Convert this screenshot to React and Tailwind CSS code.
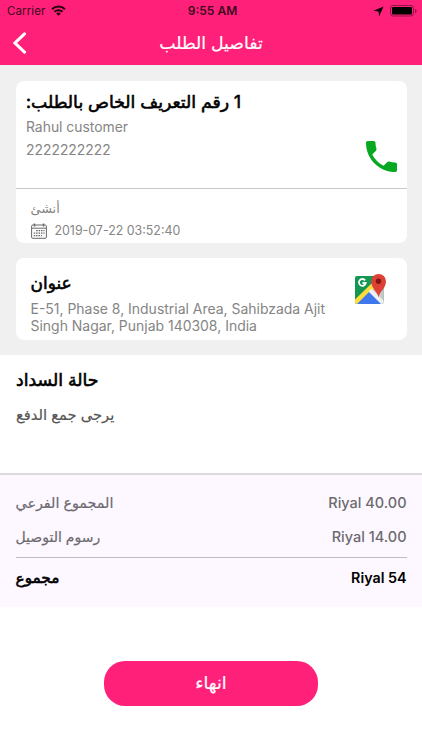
import React from "react";

const latin = "font-['Inter',sans-serif]";
const arabic = "font-['Inter','DejaVu_Sans',sans-serif]";
const heavy = "font-normal [-webkit-text-stroke:0.6px_currentColor]";
const medium = "font-normal [-webkit-text-stroke:0.2px_currentColor]";

function StatusBar() {
  return (
    <div className="grid h-[22px] grid-cols-3 items-center pl-[7px] pr-[5px] text-[11.5px] text-[#3d0a1e]">
      <div className="flex items-center gap-[6px] pt-px">
        <span className="tracking-[0.1px]">Carrier</span>
        <svg className="-mt-[2px]" width="15" height="11" viewBox="0 0 15 11" fill="none" stroke="#26000f" strokeWidth="2">
          <path d="M1 4.2a9.3 9.3 0 0 1 13 0" />
          <path d="M3.4 6.8a5.9 5.9 0 0 1 8.2 0" />
          <path d="M7.5 10.8 5.2 8.5a3.3 3.3 0 0 1 4.6 0Z" fill="#26000f" stroke="none" />
        </svg>
      </div>
      <span className="pl-px text-center text-[12px] font-semibold leading-[20px]">9:55 AM</span>
      <div className="flex items-center justify-end gap-[6px]">
        <svg width="11" height="11" viewBox="0 0 11 11" fill="#12000a">
          <path d="M10.6.4 6.1 10.4 5.5 5.5.4 4.8Z" />
        </svg>
        <svg width="27" height="12" viewBox="0 0 27 12">
          <rect x=".5" y=".5" width="23" height="10.5" rx="2.5" fill="none" stroke="#8d1747" />
          <rect x="2" y="2" width="20" height="7.5" rx="1" fill="#000" />
          <path d="M25 4v4c1-.3 1.5-1 1.5-2S26 4.300 25 4Z" fill="#8d1747" />
        </svg>
      </div>
    </div>
  );
}

function PhoneIcon() {
  return (
    <svg width="31" height="31" viewBox="3 3 18 18" fill="#08a822">
      <path d="M6.620 10.790c1.440 2.830 3.760 5.140 6.590 6.590l2.200-2.200c.27-.27.67-.36 1.020-.24 1.120.37 2.330.57 3.570.57.55 0 1 .45 1 1V20c0 .55-.45 1-1 1C10.610 21 3 13.390 3 4c0-.55.45-1 1-1h3.500c.55 0 1 .45 1 1 0 1.250.2 2.450.57 3.570.11.350.03.740-.25 1.020l-2.200 2.200Z" />
    </svg>
  );
}

function CalendarIcon() {
  return (
    <svg width="16" height="16" viewBox="0 0 16 16" fill="none" stroke="#666">
      <rect x=".6" y="2" width="14.800" height="13.300" rx="1.200" />
      <path d="M.6 5.200h14.800" />
      <path d="M3.500.4v3M12.500.4v3" strokeWidth="1.400" />
      <path d="M5.200 7.700h8.300M2.700 10.200h10.800M2.700 12.700h8.300" strokeWidth="1.300" strokeDasharray="1.500 .9" />
    </svg>
  );
}

function MapsIcon() {
  return (
    <svg width="32" height="32" viewBox="0 0 32 32">
      <defs>
        <clipPath id="tile">
          <rect x="0" y="3" width="28.500" height="28" rx="2" />
        </clipPath>
      </defs>
      <g clipPath="url(#tile)">
        <path d="M0 3h29v28H0Z" fill="#169653" />
        <path d="M29 10v21L15 17.500 20 10Z" fill="#c9c9c9" />
        <path d="M-1 27.500 16.500 10.500l3.500 4L1 33H-1Z" fill="#ffdc3a" />
        <path d="M2 31 14.500 18.500 27 31Z" fill="#3f78ec" />
        <path d="m13.500 18.500 2.800-2.800L30 29v4h-2Z" fill="#eef0f2" />
      </g>
      <path d="M23.500 24.500c-.7-5.500-7.300-9-7.300-16.200a7.400 7.400 0 0 1 14.800 0c0 7.200-6.800 10.700-7.500 16.200Z" fill="#df4035" />
      <circle cx="23.500" cy="8.200" r="2.700" fill="#7c1714" />
      <path d="M10.100 7.400A3.400 3.400 0 1 0 10.700 10H7.500" fill="none" stroke="#fff" strokeWidth="1.800" />
    </svg>
  );
}

export default function App() {
  return (
    <div className={`flex h-[750px] w-[422px] flex-col overflow-hidden bg-white ${latin}`}>
      <header className="h-[65px] bg-[#ff2079]">
        <StatusBar />
        <div className="grid h-[43px] grid-cols-[40px_1fr_40px] items-center">
          <svg className="-mt-[2px] ml-[13px]" width="14" height="22" viewBox="0 0 14 22" fill="none" stroke="#fff" strokeWidth="3" strokeLinecap="round">
            <path d="M11.500 1.800 2 11l9.500 9.200" />
          </svg>
          <h1 dir="rtl" className={`pb-[2px] text-center text-[17.300px] text-white ${medium} ${arabic}`}>تفاصيل الطلب</h1>
        </div>
      </header>

      <main className="flex flex-col">
        <div className="flex h-[290px] flex-col gap-[15px] bg-[#f0f0f0] px-[15.500px] pt-4">
          <section className="h-[162px] rounded-[8px] bg-white">
            <div className="flex h-[108px] justify-between border-b border-[#c8c8c8] pl-[10.500px] pr-[10px]">
              <div className="pt-[8px] text-[13.900px] leading-[23px] text-[#858585]">
                <h2 dir="rtl" className={`h-[27px] w-fit whitespace-nowrap text-[17.300px] leading-[25px] text-black ${heavy} ${arabic}`}>1 رقم التعريف الخاص بالطلب:</h2>
                <p>Rahul customer</p>
                <p>2222222222</p>
              </div>
              <div className="pt-[60px]"><PhoneIcon /></div>
            </div>
            <div className="pl-[15px] pt-[9px] text-[#858585]">
              <p dir="rtl" className={`h-[22px] w-fit text-[12.800px] leading-[22px] ${arabic}`}>أنشئ</p>
              <div className="flex h-[22px] items-center gap-2 text-[12.400px]">
                <CalendarIcon />
                <span>2019-07-22 03:52:40</span>
              </div>
            </div>
          </section>

          <section className="flex h-[82px] justify-between rounded-[8px] bg-white pl-[15px] pr-[20px]">
            <div className="pt-[13px] text-[13.960px] leading-[17px] text-[#858585]">
              <h2 dir="rtl" className={`h-[29px] w-fit text-[17px] leading-[24px] text-black ${heavy} ${arabic}`}>عنوان</h2>
              <p className="whitespace-nowrap">E-51, Phase 8, Industrial Area, Sahibzada Ajit<br />Singh Nagar, Punjab 140308, India</p>
            </div>
            <div className="pt-[15px]"><MapsIcon /></div>
          </section>
        </div>

        <section className="h-[120px] border-b-2 border-[#dcdadd] px-4 pt-[12px]">
          <h2 dir="rtl" className={`w-fit text-[17.300px] leading-[26px] text-black ${heavy} ${arabic}`}>حالة السداد</h2>
          <p dir="rtl" className={`mt-[10px] w-fit text-[14.700px] leading-[24px] text-[#555] ${medium} ${arabic}`}>يرجى جمع الدفع</p>
        </section>

        <section className={`h-[132px] bg-[#fdf8ff] px-[15.500px] pt-[11px] text-[14.500px] font-medium text-[#6d6a6f] ${arabic}`}>
          <div className="flex h-[34px] items-center justify-between">
            <span dir="rtl" className={`text-[14.300px] ${medium}`}>المجموع الفرعي</span><span>Riyal 40.00</span>
          </div>
          <div className="flex h-[38px] items-center justify-between border-b border-[#bfbbc1] pb-[4px]">
            <span dir="rtl" className={`text-[14px] ${medium}`}>رسوم التوصيل</span><span>Riyal 14.00</span>
          </div>
          <div className="flex h-[40px] items-center justify-between font-semibold text-black">
            <span dir="rtl" className={`text-[15.300px] ${heavy}`}>مجموع</span><span className="text-[14.300px]">Riyal 54</span>
          </div>
        </section>

        <button dir="rtl" className={`mx-auto mt-[54px] h-[45px] w-[214px] rounded-[21px] bg-[#ff2079] text-[17.600px] text-white ${medium} ${arabic}`}>انهاء</button>
      </main>
    </div>
  );
}
